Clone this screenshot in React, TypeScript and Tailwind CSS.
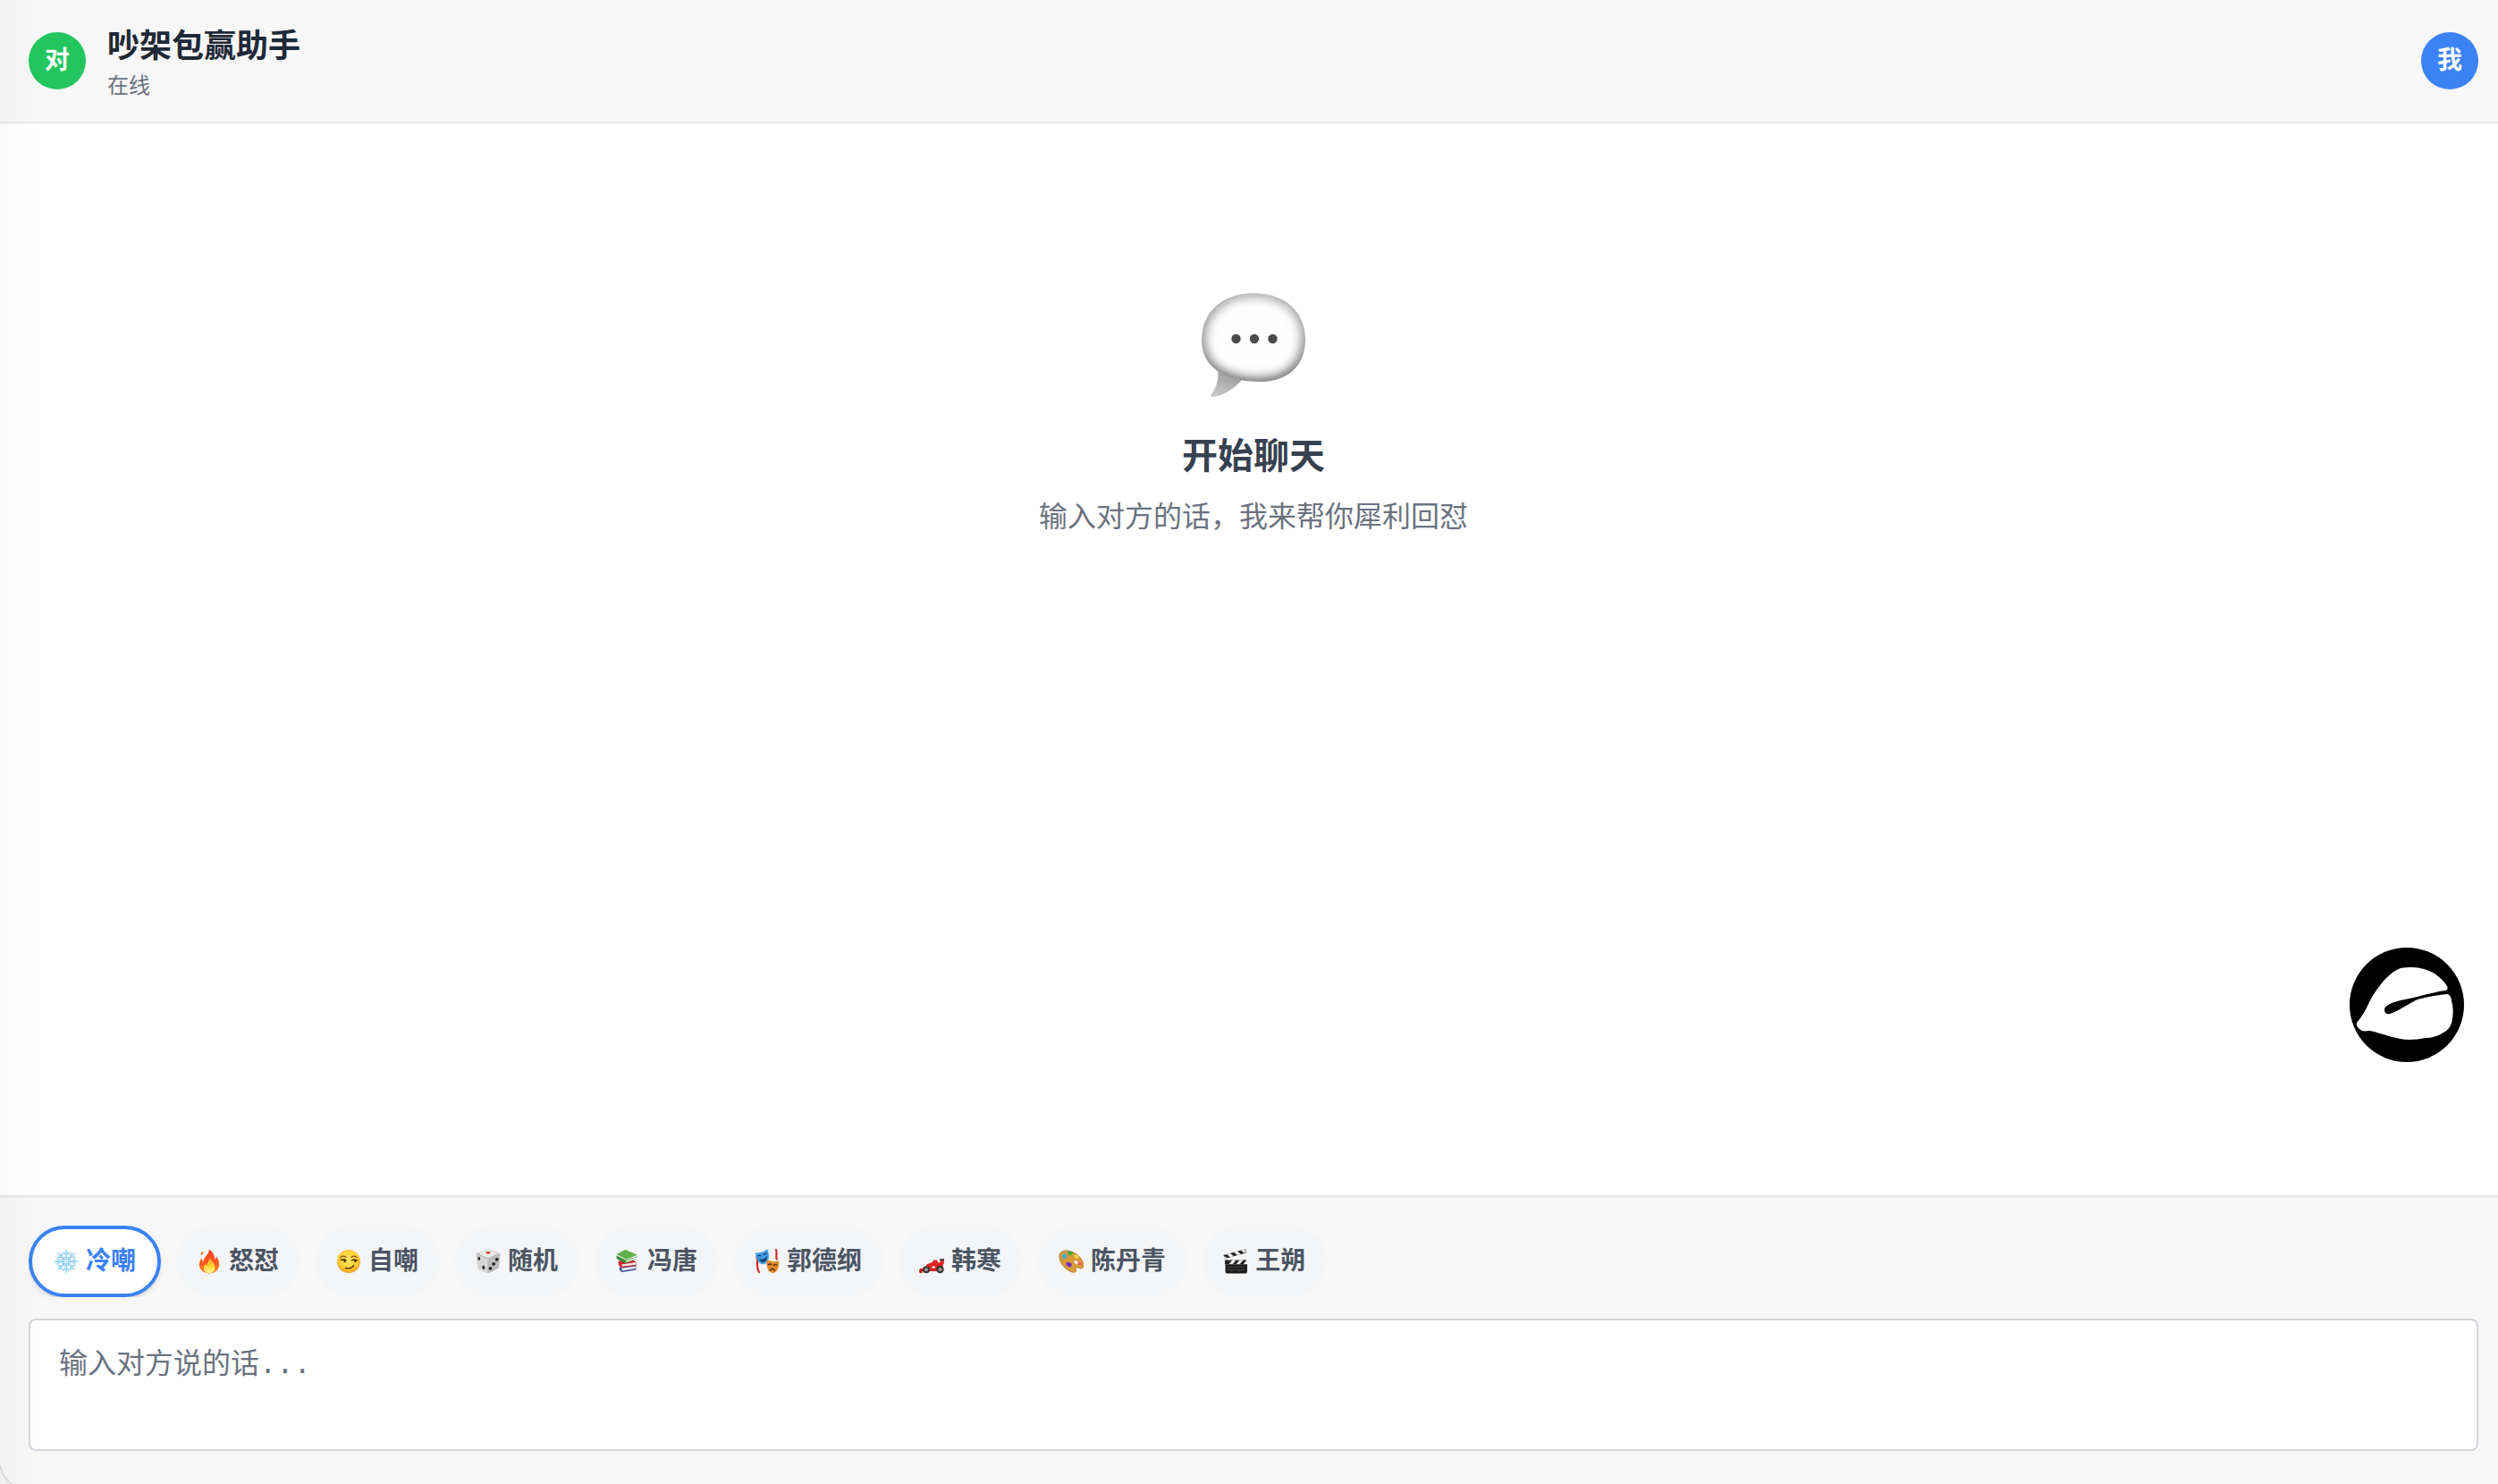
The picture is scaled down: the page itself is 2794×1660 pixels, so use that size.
import { useState } from 'react';
import type { ReactNode } from 'react';

interface Style {
  id: string;
  label: string;
  icon: ReactNode;
}

function SnowflakeIcon() {
  return (
    <svg className="w-7 h-7 shrink-0" viewBox="0 0 28 28" fill="none" stroke="#a3d8f5" strokeWidth="1.8" strokeLinecap="round">
      {[0, 45, 90, 135, 180, 225, 270, 315].map((deg) => (
        <g key={deg} transform={`rotate(${deg} 14 14)`}>
          <path d="M14 14V1.5M14 7l-3-3M14 7l3-3" />
          <path d="M14 10.5l-1.500-1.500M14 10.500l1.500-1.500" stroke="#7cc3ec" strokeWidth="1" />
        </g>
      ))}
      <circle cx="14" cy="14" r="2" fill="#d4f0fc" stroke="none" />
    </svg>
  );
}

function FireIcon() {
  return (
    <svg className="w-7 h-7 shrink-0" viewBox="0 0 28 28">
      <defs>
        <linearGradient id="fire" x1="0" y1="0" x2="0" y2="1">
          <stop offset="0" stopColor="#f0401c" />
          <stop offset="0.6" stopColor="#fb5a20" />
          <stop offset="1" stopColor="#ff9a1e" />
        </linearGradient>
        <linearGradient id="flame" x1="0" y1="0" x2="0" y2="1">
          <stop offset="0" stopColor="#ff9a2a" />
          <stop offset="0.6" stopColor="#ffdc3c" />
          <stop offset="1" stopColor="#fff6a0" />
        </linearGradient>
      </defs>
      <path d="M14 0.5c4 3 6.5 6.500 6 11.500 1-.8 1.600-2 1.800-3.500 2.500 3 3.500 6.500 3.200 10-.4 5.500-5 9-10.700 9S3.400 24 3 18.500c-.2-3.500 1-6.500 2.600-8.500.2 2.200.8 3.600 1.900 4.500C7.500 9 13.500 7 14 .5z" fill="url(#fire)" />
      <path d="M5 4.500l2.500-2-.5 3-2.500 2z" fill="#fb5a30" />
      <path d="M15 9.500c.5 4 5.500 6 5.500 11.500 0 3.500-2.700 6-6.300 6S8 24.500 8 21.500c0-2.500 1-4 2-5 .3 1.500.8 2 1.600 2.500C11.500 15 14.500 13 15 9.500z" fill="url(#flame)" />
    </svg>
  );
}

function SmirkIcon() {
  return (
    <svg className="w-7 h-7 shrink-0" viewBox="0 0 28 28">
      <defs>
        <radialGradient id="face" cx="0.5" cy="0.4" r="0.6">
          <stop offset="0" stopColor="#ffe95c" />
          <stop offset="0.7" stopColor="#fdcb35" />
          <stop offset="1" stopColor="#ee9a1c" />
        </radialGradient>
      </defs>
      <circle cx="14" cy="14" r="13" fill="url(#face)" />
      <path d="M5 9.500c2-1.600 4.300-1.600 6-.2M17 9.300c2-1.500 4.300-1.300 6 .2" fill="none" stroke="#8a4a10" strokeWidth="1.300" strokeLinecap="round" />
      <path d="M5.500 12.500c2-.9 4-.6 5.500.4M17.500 12.900c2-1 4-1.200 5.700-.2" fill="none" stroke="#5c300c" strokeWidth="1.600" strokeLinecap="round" />
      <circle cx="9.500" cy="13.700" r="1.300" fill="#4a260a" />
      <circle cx="21.300" cy="13.700" r="1.300" fill="#4a260a" />
      <path d="M10.500 21.500c4 .8 7.300-.2 9-2.900" fill="none" stroke="#5c300c" strokeWidth="1.500" strokeLinecap="round" />
    </svg>
  );
}

function DiceIcon() {
  return (
    <svg className="w-7 h-7 shrink-0" viewBox="0 0 28 28">
      <path d="M2 4.800L12.500.8q1.500-.5 3 0L26 4.500q1.500.6 1.400 2.200L26 20q-.3 1.500-1.500 2.300L15 27q-1.500.6-3 0L4 23.300q-1.500-.8-1.700-2.300L.6 7q0-1.600 1.400-2.200z" fill="#bcbcbe" />
      <path d="M2.500 5L13 1.200q1-.3 2 0L25.500 5 14 10z" fill="#ececec" />
      <path d="M1 6.500L13.500 11v16q-1 .2-2-.3L4 23.300q-1.500-.8-1.700-2.300z" fill="#d6d6d7" />
      <ellipse cx="14" cy="4.300" rx="2.600" ry="1.300" fill="#e0362c" />
      <g fill="#222">
        <ellipse cx="3.900" cy="10.800" rx="1.300" ry="2" transform="rotate(-15 3.900 10.800)" />
        <ellipse cx="8.800" cy="20.800" rx="1.400" ry="2.200" transform="rotate(-15 8.800 20.800)" />
        <circle cx="23.800" cy="11.800" r="1.900" />
        <circle cx="20.200" cy="16.800" r="1.900" />
        <circle cx="16.500" cy="21.800" r="1.900" />
      </g>
    </svg>
  );
}

function BooksIcon() {
  return (
    <svg className="w-7 h-7 shrink-0" viewBox="0 0 28 28">
      <path d="M5 20.500l17.500-2 1 1.500v3.500L8 26c-3-1-3.800-3.500-3-5.500z" fill="#3c4f9c" />
      <path d="M7 21.500l16-2v2.500L8 24.500z" fill="#e6e6ee" />
      <path d="M4 13.500L21 13l2.500 2v4L7 20.800c-3-.8-4-4.800-3-7.300z" fill="#c8262c" />
      <path d="M7 17.500L23 15v2.800L8 19.600z" fill="#ececec" />
      <path d="M2 7.500l10 5 12.500-4V11L12 16 3 12C1.500 11 1 9 2 7.500z" fill="#3c8c34" />
      <path d="M12 13.200L24.500 9v2l-12.500 4z" fill="#e9eee6" />
      <path d="M1.500 6L11.500.7 25 6.800 12.500 11.800z" fill="#62b04c" />
    </svg>
  );
}

function MasksIcon() {
  return (
    <svg className="w-7 h-7 shrink-0" viewBox="0 0 28 28" fill="none">
      <path d="M2.500 9c2 5-1.500 11 2.500 17M24 1c1.500 3-.5 6 .8 10.500" stroke="#d02a28" strokeWidth="2.200" strokeLinecap="round" />
      <path d="M1 4.500c4.500.3 9-1 13.500-4C17 7 16.500 15 11 17 5 18.500 1.500 11 1 4.500z" fill="#3f9be0" />
      <path d="M3.500 8.200c1-1.200 2.500-1.300 3.500-.3M10 6.500c.8-1.300 2.300-1.500 3.300-.7M6 12c2.800.8 5.500 0 7.300-2.500-.2 3-1.800 4.600-3.600 4.700-1.800 0-3-.8-3.700-2.200z" stroke="#0f3c6c" strokeWidth="1.100" fill="#0f3c6c" />
      <path d="M13.500 12c4.500 2.200 9 2.800 13.700 1.500.6 6.500-2 13.500-7 13.500-5.500-.3-7.200-8-6.700-15z" fill="#dc8b2c" />
      <path d="M15.500 17.500c1-.8 2.200-.7 3.200.3M21.500 18.300c1-1 2.300-1 3.300-.3M17.500 24c1-2.500 4-2.500 5 .2" stroke="#5c2c0c" strokeWidth="1.500" strokeLinecap="round" />
    </svg>
  );
}

function RaceCarIcon() {
  return (
    <svg className="w-7 h-7 shrink-0" viewBox="0 0 28 28">
      <path d="M0 25l1-3 5-.5 3-4.500 6-2 1-2.500h4l1.500 3 2-.3V11h4.300v5.500l-1 1V25H3z" fill="#e0241e" />
      <path d="M0 23.800h3.500V27H.5z" fill="#b81612" />
      <path d="M23.500 11h4.300v2.500h-4.300z" fill="#4a4450" />
      <circle cx="8" cy="23.200" r="4" fill="#363636" />
      <circle cx="8" cy="23.200" r="2" fill="#9b9b9b" />
      <circle cx="23.500" cy="23" r="4.200" fill="#363636" />
      <circle cx="23.500" cy="23" r="2.100" fill="#9b9b9b" />
      <path d="M14.500 19.500h3.500v2h-3.500z" fill="#fff" />
    </svg>
  );
}

function PaletteIcon() {
  return (
    <svg className="w-7 h-7 shrink-0" viewBox="0 0 28 28">
      <path d="M2 4.500C6.500-.5 17 2.500 22.500 8c4.500 4.300 7 10.500 4.500 13.200-2.300 2-5-1.200-7-.2-1.800 1 .8 4.300-1.500 5-4 1-11-3-14.800-9C1 12.500 0 7.500 2 4.500z" fill="#d89a3c" stroke="#a86e22" strokeWidth="0.800" />
      <path d="M18.500 13.500c2-1 3.700 1 3 2.500s-3.300.6-3.700-.5 0-1.500.7-2z" fill="#fff" />
      <ellipse cx="6.500" cy="8.200" rx="2.400" ry="2.900" fill="#38acd8" />
      <ellipse cx="13" cy="4.800" rx="3" ry="2.200" transform="rotate(20 13 4.800)" fill="#44a83a" />
      <ellipse cx="20" cy="8.700" rx="2.600" ry="2" transform="rotate(45 20 8.700)" fill="#f2d840" />
      <ellipse cx="11.500" cy="17.500" rx="3.400" ry="2.400" transform="rotate(25 11.500 17.500)" fill="#7c34b0" />
      <ellipse cx="24" cy="16.500" rx="1.800" ry="2.600" transform="rotate(-35 24 16.500)" fill="#ee6a50" />
    </svg>
  );
}

function ClapperIcon() {
  return (
    <svg className="w-7 h-7 shrink-0" viewBox="0 0 28 28">
      <path d="M.5 7L25 .3l1.300 3.900L2 11z" fill="#262626" />
      <path d="M4 6l4-1.100 4 3.300-4 1.100zM12 3.800l4-1.100 4 3.300-4 1.100zM20 1.700l4-1.100 1.800 3-2 .9z" fill="#f2f2f2" />
      <path d="M.5 8L4.500 10l1.500 3-3.500 1.500z" fill="#dcdcdc" />
      <path d="M2 12.500h25v4.700H2z" fill="#262626" />
      <path d="M6.500 17.200l4-4.700h4l-4 4.700zM14.500 17.200l4-4.700h4l-4 4.700zM22.500 17.200l4-4.700h.5v4.700z" fill="#f2f2f2" />
      <path d="M2.500 17.200H27V25q0 2.500-2 2.500H4.500q-2 0-2-2.500z" fill="#1d1d1d" />
      <path d="M4 20.300h21M4 23.500h21M10 24v2M18 24v2" stroke="#555" strokeWidth="0.700" />
    </svg>
  );
}

function BubbleIcon() {
  return (
    <svg className="w-[120px] h-[120px]" viewBox="0 0 120 120">
      <defs>
        <linearGradient id="tail" x1="0.300" y1="1" x2="0.700" y2="0">
          <stop offset="0" stopColor="#c8c8c8" />
          <stop offset="1" stopColor="#8e8e8e" />
        </linearGradient>
        <linearGradient id="rim" x1="0" y1="0" x2="0" y2="1">
          <stop offset="0" stopColor="#a0a0a0" />
          <stop offset="0.500" stopColor="#8a8a8a" />
          <stop offset="1" stopColor="#5c5c5c" />
        </linearGradient>
        <filter id="soft" x="-20%" y="-20%" width="140%" height="140%">
          <feGaussianBlur stdDeviation="6" />
        </filter>
        <clipPath id="body-clip">
          <path d="M60 2C97 2 118 24 118 54c0 31-22 47-50 47C26 101 2 84 2 54 2 24 24 2 60 2z" />
        </clipPath>
      </defs>
      <path d="M20 82c1 12 1 22-7 33-1 2-1 3 1 3 12-1 23-8 33-19z" fill="url(#tail)" />
      <g clipPath="url(#body-clip)">
        <path d="M0 0h120v120H0z" fill="#fefefe" />
        <path d="M60 0C98 0 120 22 120 53c0 33-24 50-52 50C24 103 0 84 0 54 0 24 24 0 60 0z" fill="none" stroke="url(#rim)" strokeWidth="12" filter="url(#soft)" />
      </g>
      <g fill="#4a4a4a">
        <circle cx="40.500" cy="53" r="5.200" />
        <circle cx="61" cy="53" r="5.200" />
        <circle cx="81.500" cy="53" r="5.200" />
      </g>
    </svg>
  );
}

function LeafLogo() {
  return (
    <svg className="w-32 h-32" viewBox="0 0 128 128">
      <circle cx="64" cy="64" r="64" fill="#000" />
      <path
        d="M8 84C14 77 18 70 22 61C27 51 33 43 40 35C46 29 51 25 57 23C61 22 66 22 70 22C79 22 88 25 95 29C101 33 106 38 109 43Q111 47 107 48C98 49 88 52 79 54C69 57 59 58 50 61C44 63 39 66 39 69C39 73 41 75 45 74C55 71 65 63 76 58C87 55 98 53 109 52Q113 52 114 59C116 66 116 73 115 80C114 87 111 92 105 95C99 99 92 101 85 101C79 102 73 103 67 103C59 103 52 101 44 99C37 97 29 94 22 93C19 93 17 94 14 93C10 91 7 87 8 84Z"
        fill="#fff"
      />
    </svg>
  );
}

const STYLES: Style[] = [
  { id: 'cold', label: '冷嘲', icon: <SnowflakeIcon /> },
  { id: 'angry', label: '怒怼', icon: <FireIcon /> },
  { id: 'self', label: '自嘲', icon: <SmirkIcon /> },
  { id: 'random', label: '随机', icon: <DiceIcon /> },
  { id: 'fengtang', label: '冯唐', icon: <BooksIcon /> },
  { id: 'guodegang', label: '郭德纲', icon: <MasksIcon /> },
  { id: 'hanhan', label: '韩寒', icon: <RaceCarIcon /> },
  { id: 'chendanqing', label: '陈丹青', icon: <PaletteIcon /> },
  { id: 'wangshuo', label: '王朔', icon: <ClapperIcon /> },
];

export default function App() {
  const [active, setActive] = useState('cold');
  const [text, setText] = useState('');

  return (
    <div className="relative min-h-screen flex flex-col overflow-hidden bg-white font-['Liberation_Sans','Noto_Sans_CJK_SC',sans-serif]">
      <header className="flex items-center justify-between bg-[#f7f7f7] border-b-2 border-[#e5e7eb] pl-8 pr-[22px] py-6">
        <div className="flex items-center gap-6">
          <div className="w-16 h-16 rounded-full bg-[#22c55e] flex items-center justify-center text-white text-[28px] font-bold">对</div>
          <div>
            <h1 className="text-4xl leading-14 font-bold text-[#1f2937]">吵架包赢助手</h1>
            <p className="text-2xl leading-8 text-[#6b7280]">在线</p>
          </div>
        </div>
        <div className="w-16 h-16 rounded-full bg-[#3b82f6] flex items-center justify-center text-white text-[28px] font-bold">我</div>
      </header>

      <main className="flex-1 flex flex-col items-center pl-8 pr-[22px] pt-47">
        <BubbleIcon />
        <h2 className="mt-9 text-[40px] leading-14 font-bold text-[#374151]">开始聊天</h2>
        <p className="mt-4 text-[32px] leading-12 text-[#6b7280]">输入对方的话，我来帮你犀利回怼</p>
      </main>

      <footer className="bg-[#f7f7f7] border-t-2 border-[#e5e7eb] pl-8 pr-[22px] pt-8 pb-[37px]">
        <div className="flex gap-4 overflow-hidden mb-6">
          {STYLES.map((s) => (
            <button
              key={s.id}
              type="button"
              onClick={() => setActive(s.id)}
              className={`h-20 shrink-0 rounded-full px-6 flex items-center gap-2 text-[28px] leading-10 font-bold cursor-pointer ${
                active === s.id ? 'bg-white border-4 border-[#3b82f6] text-[#3b82f6] shadow-md' : 'bg-[#f3f5f7] text-[#4b5563]'
              }`}
            >
              {s.icon}
              {s.label}
            </button>
          ))}
        </div>
        <textarea
          rows={2}
          value={text}
          onChange={(e) => setText(e.target.value)}
          aria-label="输入对方说的话"
          placeholder="输入对方说的话..."
          className="block w-full resize-none rounded-lg border-2 border-[#d1d5db] bg-white px-8 py-6 text-[32px] leading-12 text-[#1f2937] placeholder:text-[#6b7280] outline-none focus:border-[#3b82f6] font-['DejaVu_Sans_Mono','Noto_Sans_CJK_SC',monospace]"
        />
      </footer>

      <button type="button" aria-label="助手" className="absolute right-[38px] bottom-[472px] rounded-full cursor-pointer">
        <LeafLogo />
      </button>

      {/* window edge: faint shade on the left and the rounded corner */}
      <div className="absolute inset-y-0 left-0 w-12 bg-linear-to-r from-black/2 to-transparent pointer-events-none" />
      <svg className="absolute left-0 bottom-0 w-4 h-6 pointer-events-none" viewBox="0 0 16 24">
        <path d="M0 3Q2 16 13 24H0z" fill="#f1f1f1" />
        <path d="M0 3Q2 16 13 24" fill="none" stroke="#d4d4d4" strokeWidth="1.500" />
      </svg>
    </div>
  );
}
